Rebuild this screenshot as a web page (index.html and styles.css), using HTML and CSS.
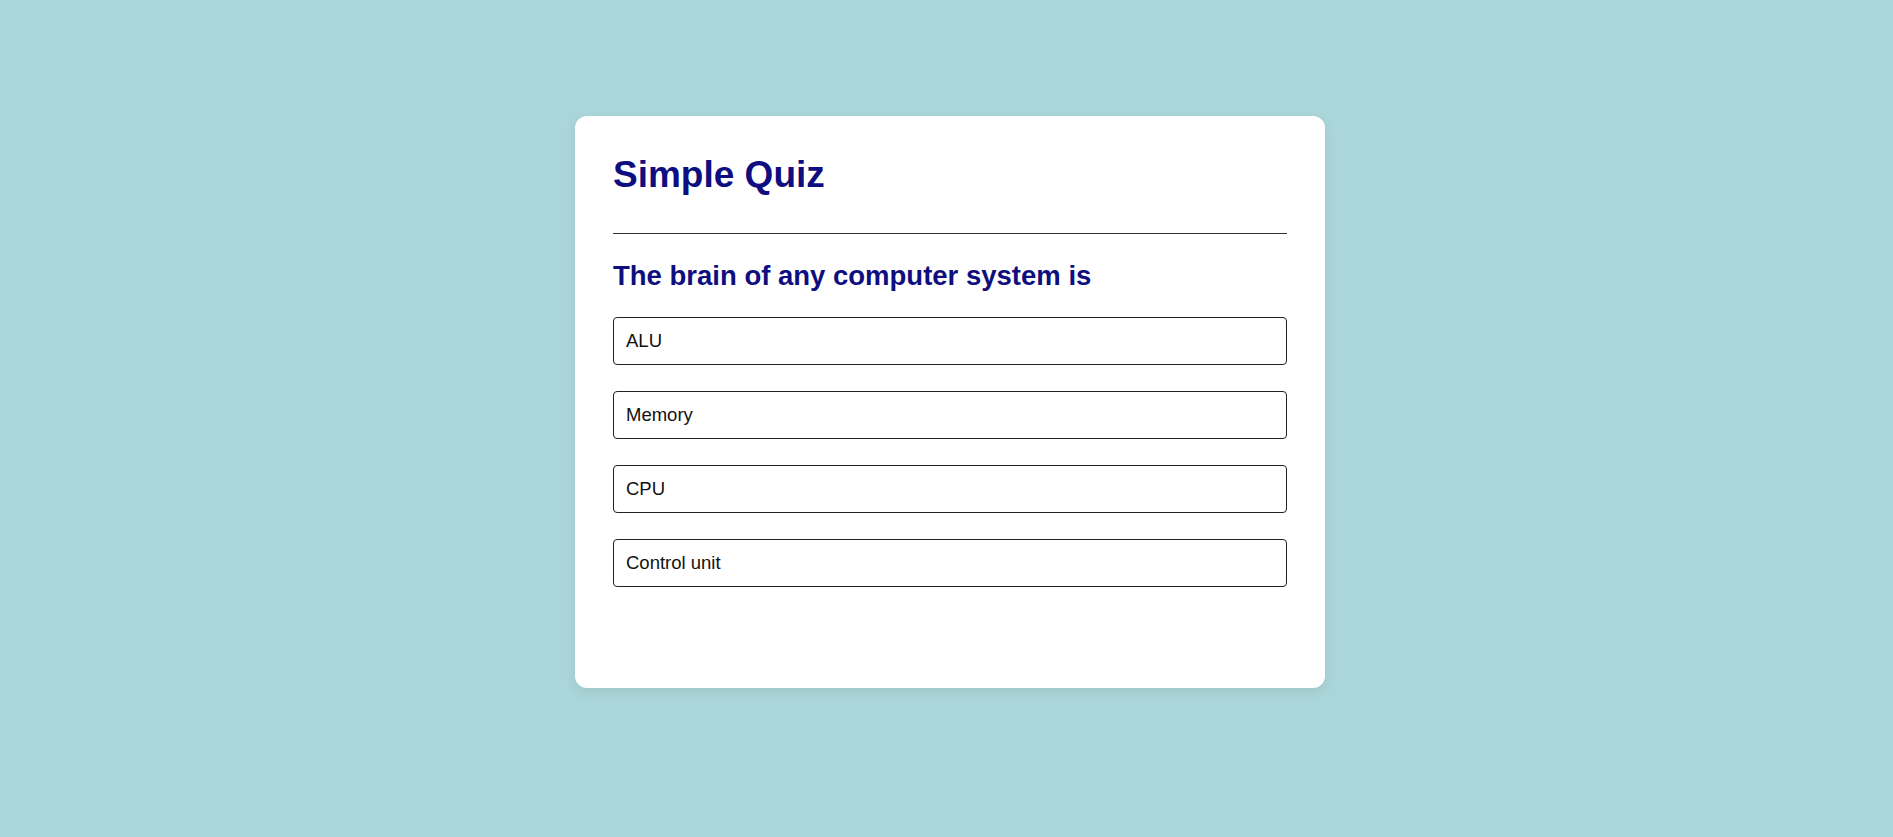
FILE: index.html
```html
<!DOCTYPE html>
<html lang="en">
<head>
<meta charset="utf-8">
<title>Simple Quiz</title>
<link rel="stylesheet" href="styles.css">
</head>
<body>
<div class="page">
  <div class="app">
    <h1 class="title">Simple Quiz</h1>
    <div class="quiz">
      <h2 class="question">The brain of any computer system is</h2>
      <div class="answers">
        <button class="btn">ALU</button>
        <button class="btn">Memory</button>
        <button class="btn">CPU</button>
        <button class="btn">Control unit</button>
      </div>
    </div>
  </div>
</div>
</body>
</html>
```
FILE: styles.css
```css
* { box-sizing: border-box; }
html, body { margin: 0; padding: 0; }
body {
  background: #abd6d9;
  font-family: "Liberation Sans", Arial, sans-serif;
  height: 837px;
}
.page {
  display: flex;
  justify-content: center;
  padding: 116px 0 0 7px;
}
.app {
  width: 750px;
  height: 572px;
  background: #fff;
  border-radius: 12px;
  padding: 38px 38px 0 38px;
  box-shadow: 0 4px 12px rgba(0, 0, 0, 0.08);
}
.title {
  margin: 0;
  font-size: 37px;
  line-height: 41px;
  font-weight: bold;
  color: #0e0e80;
  padding-bottom: 38px;
  border-bottom: 1px solid #333;
}
.quiz { padding-top: 26px; }
.question {
  margin: 0;
  font-size: 27.5px;
  line-height: 31px;
  font-weight: bold;
  color: #0e0e80;
}
.answers {
  margin-top: 26px;
  display: flex;
  flex-direction: column;
  gap: 26px;
}
.btn {
  display: block;
  width: 100%;
  height: 48px;
  background: #fff;
  border: 1px solid #222;
  border-radius: 4px;
  padding: 0 12px;
  text-align: left;
  font-family: "Liberation Sans", Arial, sans-serif;
  font-size: 18.5px;
  color: #111;
}
```
